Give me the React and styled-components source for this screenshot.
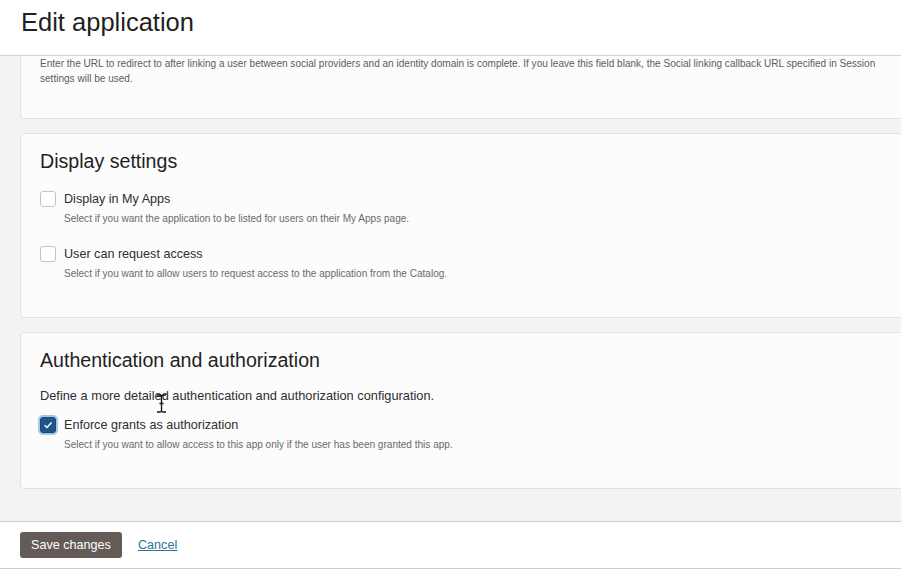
import React from "react";
import styled, { createGlobalStyle, css } from "styled-components";

const GlobalStyle = createGlobalStyle`
  html, body {
    margin: 0;
    padding: 0;
    background: #ffffff;
    overflow: hidden;
  }
  body {
    font-family: "Liberation Sans", Arial, sans-serif;
  }
`;

const Page = styled.div`
  display: flex;
  flex-direction: column;
  width: 901px;
  height: 571px;
  overflow: hidden;
  position: relative;
`;

const Header = styled.header`
  height: 55px;
  flex: none;
  display: flex;
  align-items: flex-start;
  padding-left: 21px;
  background: #ffffff;
  border-bottom: 1px solid #d6d4d3;
  box-sizing: content-box;
`;

const Title = styled.h1`
  margin: 6px 0 0;
  font-size: 25.5px;
  line-height: 32px;
  font-weight: 400;
  color: #1f1f1f;
`;

const Content = styled.main`
  flex: 1;
  display: flex;
  flex-direction: column;
  gap: 14px;
  padding-left: 20px;
  background: #f5f3f2;
  overflow: hidden;
`;

const Card = styled.section`
  margin-right: -12px;
  background: #fcfcfc;
  border: 1px solid #e3e1df;
  border-radius: 4px;
  padding: ${(p) => p.$pad};
  ${(p) =>
    p.$clipped &&
    css`
      border-top: none;
      border-top-left-radius: 0;
      border-top-right-radius: 0;
    `}
`;

const Heading = styled.h2`
  margin: 0;
  font-size: 19.6px;
  line-height: 24px;
  font-weight: 400;
  color: #1f1f1f;
`;

const Note = styled.p`
  margin: 0;
  font-size: 10.05px;
  line-height: 15px;
  color: #5c5c5c;
`;

const Lead = styled.p`
  margin: 16px 0 0;
  font-size: 12.8px;
  line-height: 16px;
  color: #2e2e2e;
`;

const Option = styled.div`
  margin-top: ${(p) => p.$top}px;
`;

const Row = styled.label`
  display: flex;
  align-items: center;
  gap: 8px;
  height: 16px;
`;

const Box = styled.span`
  width: 16px;
  height: 16px;
  box-sizing: border-box;
  border-radius: 3px;
  display: flex;
  align-items: center;
  justify-content: center;
  flex: none;
  ${(p) =>
    p.$checked
      ? css`
          background: #235487;
          border: 1px solid #1b4675;
          box-shadow: 0 0 0 2px #a6c8e0;
        `
      : css`
          background: #ffffff;
          border: 1px solid #c6c4c3;
        `}
`;

const Label = styled.span`
  font-size: 12.6px;
  line-height: 16px;
  color: #2e2e2e;
`;

const Help = styled.div`
  margin: 5px 0 0 24px;
  font-size: 10.05px;
  line-height: 14px;
  color: #6a6a6a;
`;

const Footer = styled.footer`
  flex: none;
  height: 46px;
  display: flex;
  align-items: center;
  gap: 16px;
  padding-left: 20px;
  background: #ffffff;
  border-top: 1px solid #cfcdcc;
  border-bottom: 1px solid #cfcdcc;
  margin-bottom: 2px;
`;

const Button = styled.button`
  height: 26px;
  width: 102px;
  padding: 0;
  border: none;
  border-radius: 3px;
  background: #645a56;
  color: #ffffff;
  font-family: inherit;
  font-size: 12.6px;
`;

const Link = styled.a`
  font-size: 12.6px;
  color: #2b7595;
  text-decoration: underline;
`;

const Cursor = styled.svg`
  position: absolute;
  left: 156px;
  top: 394px;
`;

function Check({ checked }) {
  return (
    <Box $checked={checked}>
      {checked && (
        <svg width="10" height="10" viewBox="0 0 10 10">
          <path d="M1.6 5.2 L4 7.5 L8.5 2.5" fill="none" stroke="#ffffff" strokeWidth="1.4" />
        </svg>
      )}
    </Box>
  );
}

function Choice({ top, checked, label, help }) {
  return (
    <Option $top={top}>
      <Row>
        <Check checked={checked} />
        <Label>{label}</Label>
      </Row>
      <Help>{help}</Help>
    </Option>
  );
}

export default function App() {
  return (
    <Page>
      <GlobalStyle />
      <Header>
        <Title>Edit application</Title>
      </Header>
      <Content>
        <Card $clipped $pad="0 20px 32px 19px">
          <Note>
            Enter the URL to redirect to after linking a user between social providers and an identity domain is
            complete. If you leave this field blank, the Social linking callback URL specified in Session settings will
            be used.
          </Note>
        </Card>
        <Card $pad="15px 19px 36px">
          <Heading>Display settings</Heading>
          <Choice
            top={18}
            label="Display in My Apps"
            help="Select if you want the application to be listed for users on their My Apps page."
          />
          <Choice
            top={20}
            label="User can request access"
            help="Select if you want to allow users to request access to the application from the Catalog."
          />
        </Card>
        <Card $pad="15px 19px 36px">
          <Heading>Authentication and authorization</Heading>
          <Lead>Define a more detailed authentication and authorization configuration.</Lead>
          <Choice
            top={13}
            checked
            label="Enforce grants as authorization"
            help="Select if you want to allow access to this app only if the user has been granted this app."
          />
        </Card>
      </Content>
      <Footer>
        <Button>Save changes</Button>
        <Link href="#">Cancel</Link>
      </Footer>
      <Cursor width="11" height="19" viewBox="0 0 11 19">
        <path d="M1 1 H4 Q5.5 1 5.5 2.5 V16.5 Q5.5 18 4 18 H1 M10 1 H7 Q5.5 1 5.5 2.5 M5.5 16.5 Q5.5 18 7 18 H10 M3.5 9.5 H7.5" fill="none" stroke="#111" strokeWidth="1.3" />
      </Cursor>
    </Page>
  );
}
